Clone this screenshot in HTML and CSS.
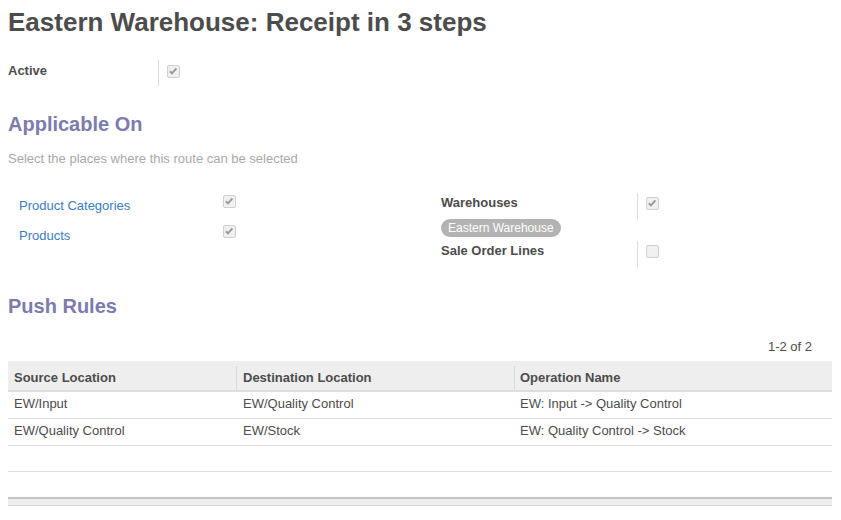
FILE: index.html
```html
<!DOCTYPE html>
<html>
<head>
<meta charset="utf-8">
<link rel="stylesheet" href="styles.css">
</head>
<body>
<div class="sheet">
  <h1 class="title">Eastern Warehouse: Receipt in 3 steps</h1>

  <div class="field-row active-row">
    <div class="label bold">Active</div>
    <div class="value sep"><span class="cb checked"><svg viewBox="0 0 12 12" width="12" height="12"><path d="M2.8 6.3 L5 8.4 L9.4 3.4" fill="none" stroke="#9a9a9a" stroke-width="2"/></svg></span></div>
  </div>

  <h2 class="section">Applicable On</h2>
  <p class="help">Select the places where this route can be selected</p>

  <div class="groups">
    <div class="group left">
      <div class="grow">
        <div class="glabel link">Product Categories</div>
        <div class="gvalue"><span class="cb checked"><svg viewBox="0 0 12 12" width="12" height="12"><path d="M2.8 6.3 L5 8.4 L9.4 3.4" fill="none" stroke="#9a9a9a" stroke-width="2"/></svg></span></div>
      </div>
      <div class="grow">
        <div class="glabel link">Products</div>
        <div class="gvalue"><span class="cb checked"><svg viewBox="0 0 12 12" width="12" height="12"><path d="M2.8 6.3 L5 8.4 L9.4 3.4" fill="none" stroke="#9a9a9a" stroke-width="2"/></svg></span></div>
      </div>
    </div>
    <div class="group right">
      <div class="rrow">
        <div class="rlabel bold">Warehouses</div>
        <div class="rvalue sep"><span class="cb checked"><svg viewBox="0 0 12 12" width="12" height="12"><path d="M2.8 6.3 L5 8.4 L9.4 3.4" fill="none" stroke="#9a9a9a" stroke-width="2"/></svg></span></div>
      </div>
      <div class="tags"><span class="tag">Eastern Warehouse</span></div>
      <div class="rrow">
        <div class="rlabel bold">Sale Order Lines</div>
        <div class="rvalue sep"><span class="cb"></span></div>
      </div>
    </div>
  </div>

  <h2 class="section push">Push Rules</h2>
  <div class="pager">1-2 of 2</div>
  <table class="list">
    <thead>
      <tr><th class="c1">Source Location</th><th class="c2">Destination Location</th><th class="c3">Operation Name</th></tr>
    </thead>
    <tbody>
      <tr><td>EW/Input</td><td>EW/Quality Control</td><td>EW: Input -&gt; Quality Control</td></tr>
      <tr><td>EW/Quality Control</td><td>EW/Stock</td><td>EW: Quality Control -&gt; Stock</td></tr>
      <tr class="empty"><td></td><td></td><td></td></tr>
    </tbody>
  </table>
  <div class="footer"></div>
</div>
</body>
</html>
```

FILE: styles.css
```css
html, body {
  margin: 0;
  padding: 0;
  background: #fff;
}
body {
  font-family: "Liberation Sans", Arial, sans-serif;
  font-size: 13px;
  color: #4c4c4c;
}
.sheet {
  padding: 0 9px 0 8px;
}
.bold { font-weight: bold; }
.title {
  margin: 0;
  padding-top: 7px;
  font-size: 26px;
  line-height: 30px;
  font-weight: bold;
  color: #4c4c4c;
}
.field-row {
  display: flex;
  margin-top: 23px;
}
.active-row .label {
  width: 150px;
  line-height: 20px;
  padding-top: 1px;
}
.sep {
  border-left: 1px solid #ddd;
}
.active-row .value {
  padding-left: 8px;
  height: 26px;
  padding-top: 5px;
  box-sizing: border-box;
}
.cb {
  display: block;
  width: 11px;
  height: 11px;
  border: 1px solid #cfcfcf;
  border-radius: 2px;
  background: #f0f0f0;
  box-sizing: content-box;
  overflow: hidden;
}
.cb svg { display: block; margin: -1px 0 0 -1px; }
.section {
  margin: 0;
  font-size: 20px;
  line-height: 24px;
  font-weight: bold;
  color: #7c7bad;
}
.active-row + .section { margin-top: 26px; }
.help {
  margin: 14px 0 0;
  color: #a9a9a9;
  line-height: 18px;
}
.groups {
  display: flex;
  margin-top: 25px;
}
.group.left {
  width: 412px;
  padding-left: 11px;
  box-sizing: border-box;
}
.grow {
  display: flex;
  height: 30px;
}
.glabel {
  width: 204px;
  line-height: 20px;
  padding-top: 3px;
}
.link { color: #3a7dc4; }
.gvalue { padding-top: 2px; }
.group.right {
  padding-left: 21px;
}
.rrow {
  display: flex;
  height: 26px;
}
.rlabel {
  width: 196px;
  line-height: 20px;
}
.tags {
  height: 18px;
  margin-bottom: 4px;
}
.tag {
  display: inline-block;
  background: #b3b3b3;
  color: #fff;
  font-size: 12px;
  line-height: 18px;
  padding: 0 7px;
  border-radius: 9px;
  vertical-align: top;
}
.rvalue {
  padding-left: 8px;
  padding-top: 4px;
  height: 26px;
  box-sizing: border-box;
}
.section.push { margin-top: 27px; }
.pager {
  text-align: right;
  padding-right: 20px;
  line-height: 18px;
  margin-top: 20px;
}
.list {
  width: 824px;
  border-collapse: collapse;
  margin-top: 5px;
}
.list th {
  background-color: #eeeeee;
  text-align: left;
  font-weight: bold;
  line-height: 20px;
  padding: 7px 6px 2px;
  border-bottom: 2px solid #dddddd;
}
.list th + th {
  background-image: linear-gradient(#dadada, #dadada);
  background-size: 1px 24px;
  background-position: left bottom;
  background-repeat: no-repeat;
}
.list th.c1 { width: 216px; }
.list th.c2 { width: 265px; padding-left: 7px; }
.list th.c3 { padding-left: 6px; }
.list td {
  height: 26px;
  padding: 3px 6px 5px;
  box-sizing: border-box;
  border-bottom: 1px solid #dddddd;
  vertical-align: top;
  line-height: 18px;
}
.list td + td { padding-left: 7px; }
.list td:nth-child(3) { padding-left: 6px; }
.footer {
  margin-top: 25px;
  width: 824px;
  height: 6px;
  background: #eeeeee;
  border-top: 2px solid #c4c4c4;
  border-bottom: 1px solid #d8d8d8;
}
```
